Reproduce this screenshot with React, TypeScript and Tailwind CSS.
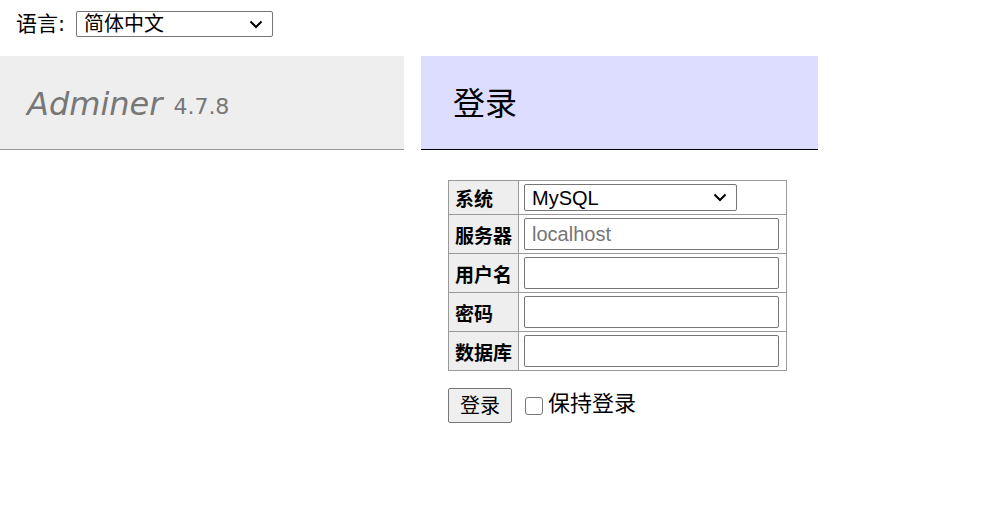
import React from "react";

const cjk = { fontFamily: '"DejaVu Sans", "Noto Sans CJK SC", sans-serif' };
const arial = { fontFamily: '"Liberation Sans", "Noto Sans CJK SC", sans-serif' };

function Chevron() {
  return (
    <svg width="14" height="9" viewBox="0 0 14 9" className="shrink-0">
      <path d="M1.5 1.5 L7 7 L12.5 1.5" fill="none" stroke="#000" strokeWidth="2" />
    </svg>
  );
}

export default function App() {
  const rows = [
    { label: "系统", kind: "select" },
    { label: "服务器", kind: "server" },
    { label: "用户名", kind: "input" },
    { label: "密码", kind: "input" },
    { label: "数据库", kind: "input" },
  ];
  return (
    <div className="w-[989px] h-[512px] bg-white text-black overflow-hidden" style={cjk}>
      <div className="h-[56px] flex items-center pl-[16px] pb-[8px]">
        <span className="text-[21px] leading-[24px] mr-[11px]">语言:</span>
        <div
          className="w-[197px] h-[26px] border border-[#767676] rounded-[2px] flex items-center justify-between pl-[7px] pr-[9px]"
          style={arial}
        >
          <span className="text-[20px] leading-[24px]" style={cjk}>简体中文</span>
          <Chevron />
        </div>
      </div>
      <div className="flex gap-[17px]">
        <div className="w-[404px] h-[94px] bg-[#eeeeee] border-b border-[#999999] flex items-center pl-[27px] pt-[2px]">
          <span className="italic text-[32px] leading-[40px] text-[#777777]" style={{ fontFamily: '"DejaVu Sans", sans-serif' }}>
            Adminer
          </span>
          <span className="text-[22px] leading-[40px] text-[#777777] ml-[11px] mt-[6px]" style={{ fontFamily: '"DejaVu Sans", sans-serif' }}>
            4.7.8
          </span>
        </div>
        <div className="flex flex-col">
          <div className="w-[397px] h-[94px] bg-[#ddddff] border-b border-black flex items-center pl-[32px] pt-[2px]">
            <span className="text-[32px] leading-[40px]">登录</span>
          </div>
          <div className="pl-[27px] pt-[30px]">
            <table className="border-collapse border border-[#999999]">
              <tbody>
                {rows.map((r, i) => (
                  <tr key={r.label}>
                    <th className={`bg-[#eeeeee] border border-[#999999] px-[6px] text-left font-bold text-[19px] leading-[24px] ${i === 0 ? "h-[34px] pt-[3px]" : "h-[39px] pt-[4px]"}`}>
                      {r.label}
                    </th>
                    <td className="border border-[#999999] pl-[5px] pr-[7px] py-[3px]">
                      {r.kind === "select" ? (
                        <div
                          className="w-[213px] h-[27px] border border-[#767676] rounded-[2px] flex items-center justify-between pl-[7px] pr-[9px]"
                          style={arial}
                        >
                          <span className="text-[20px] leading-[24px]">MySQL</span>
                          <Chevron />
                        </div>
                      ) : (
                        <div
                          className="w-[255px] h-[32px] border border-[#767676] rounded-[2px] flex items-center pl-[7px]"
                          style={arial}
                        >
                          {r.kind === "server" ? (
                            <span className="text-[20px] leading-[24px] text-[#757575]">localhost</span>
                          ) : null}
                        </div>
                      )}
                    </td>
                  </tr>
                ))}
              </tbody>
            </table>
            <div className="flex items-center mt-[17px]">
              <div className="w-[64px] h-[35px] bg-[#efefef] border border-[#767676] rounded-[2px] flex items-center justify-center">
                <span className="text-[20px] leading-[24px]">登录</span>
              </div>
              <div className="ml-[13px] w-[18px] h-[18px] border border-[#767676] rounded-[3px] bg-white" />
              <span className="ml-[5px] text-[22px] leading-[26px] -mt-[3px]">保持登录</span>
            </div>
          </div>
        </div>
      </div>
    </div>
  );
}
